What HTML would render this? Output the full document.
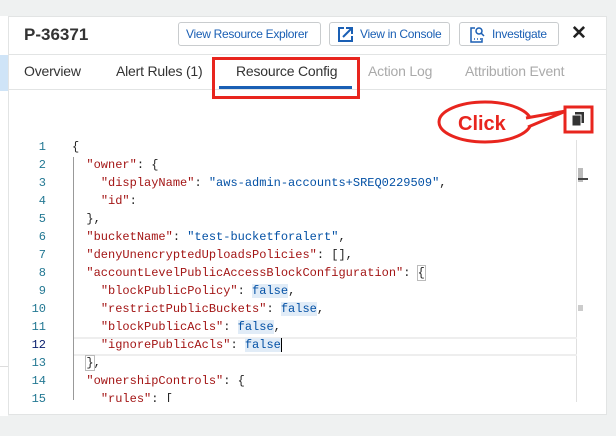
<!DOCTYPE html>
<html><head><meta charset="utf-8"><style>
*{margin:0;padding:0;box-sizing:border-box}
body{width:616px;height:436px;background:#eff1f1;position:relative;overflow:hidden;font-family:"Liberation Sans",sans-serif}
.side{position:absolute;left:0;top:16px;width:8px;height:400px;background:#fff}
.panel{position:absolute;left:8px;top:16px;width:599px;height:399px;background:#fff;border:1px solid #e2e4e4}
.abs{position:absolute}
.btn{position:absolute;top:22px;height:24px;border:1px solid #c9ccce;border-radius:3px;color:#1a5fb4;font-size:12px;letter-spacing:-0.3px;line-height:22px;padding:0 7px;background:#fff;white-space:nowrap;overflow:hidden}
.tab{position:absolute;top:63px;font-size:14px;letter-spacing:-0.2px;color:#333}
.code{position:absolute;left:0;font-family:"Liberation Mono",monospace;font-size:12px;color:#222;white-space:pre}
.ln{position:absolute;width:46px;text-align:right;font-family:"Liberation Mono",monospace;font-size:12px;color:#237893;left:0}
.ln,.code{line-height:18px}
.k{color:#a31515}.s{color:#0451a5}.b{color:#0451a5;background:#e1ecf7}
</style></head><body>
<div class="side"><div class="abs" style="left:0;top:39px;width:8px;height:36px;background:#cfe4f7"></div><div class="abs" style="left:0;top:350px;width:8px;height:1px;background:#ddd"></div></div>
<div class="panel"></div>
<div class="abs" style="left:24px;top:25px;font-size:17px;font-weight:bold;color:#333">P-36371</div>
<div class="btn" style="left:178px;width:143px">View Resource Explorer</div>
<div class="btn" style="left:329px;width:121px;padding-left:30px">View in Console</div>
<svg class="abs" style="left:337px;top:26px" width="17" height="17" viewBox="0 0 17 17" fill="none" stroke="#1a5fb4" stroke-width="2"><path d="M7 2H2v13h13v-5"/><path d="M6 11L15 2M9 2h6v6"/></svg>
<div class="btn" style="left:459px;width:100px;padding-left:32px">Investigate</div>
<svg class="abs" style="left:469px;top:26px" width="16" height="17" viewBox="0 0 16 17" fill="none" stroke="#1a5fb4" stroke-width="1.5"><path d="M6 2H2v14h11v-4"/><circle cx="10" cy="5" r="3"/><path d="M12 7l3 3"/><path d="M5 13h1M8 13h1M11 13h1"/></svg>
<div class="abs" style="left:571px;top:22px;font-size:19px;font-weight:bold;color:#222">✕</div>
<div class="abs" style="left:8px;top:54px;width:599px;height:1px;background:#e2e4e4"></div>
<div class="tab" style="left:24px">Overview</div>
<div class="tab" style="left:116px">Alert Rules (1)</div>
<div class="tab" style="left:236px">Resource Config</div>
<div class="tab" style="left:368px;color:#aaa">Action Log</div>
<div class="tab" style="left:465px;color:#aaa">Attribution Event</div>
<div class="abs" style="left:219px;top:86px;width:133px;height:3px;background:#1a5fb4"></div>
<div class="abs" style="left:8px;top:89px;width:599px;height:1px;background:#e2e4e4"></div>
<div class="abs" style="left:212px;top:57px;width:148px;height:42px;border:3px solid #e8251e"></div>
<svg class="abs" style="left:430px;top:98px" width="170" height="50"><ellipse cx="55" cy="24" rx="46" ry="20" fill="#fff" stroke="#e8251e" stroke-width="3"/><path d="M96 20L136 13L98 29" fill="#fff" stroke="#e8251e" stroke-width="3"/><rect x="135" y="9" width="27" height="25" fill="#fff" stroke="#e8251e" stroke-width="3"/><rect x="145" y="14" width="9" height="11" fill="#333"/><rect x="142" y="17" width="9" height="11" fill="#333" stroke="#fff" stroke-width="1"/></svg>
<div class="abs" style="left:458px;top:113px;font-size:20px;font-weight:bold;color:#e8251e">Click</div>
<div class="abs" style="left:576px;top:140px;width:1px;height:262px;background:#e0e0e0"></div>
<div class="abs" style="left:578px;top:168px;width:5px;height:14px;background:#bbb"></div>
<div class="abs" style="left:578px;top:178px;width:10px;height:2px;background:#444"></div>
<div class="abs" style="left:578px;top:305px;width:5px;height:6px;background:#ccc"></div>
<div class="abs" style="left:73px;top:157px;width:1px;height:243px;background:#999"></div>
<div class="abs" style="left:74px;top:337px;width:503px;height:19px;border-top:2px solid #eee;border-bottom:2px solid #eee"></div>
<div class="abs" style="left:0;top:138px;width:616px;height:264px;overflow:hidden">
<div class="ln" style="top:0">1<br>2<br>3<br>4<br>5<br>6<br>7<br>8<br>9<br>10<br>11<br><span style="color:#0b216f">12</span><br>13<br>14<br>15</div>
<div class="code" style="left:72px;top:0">{
  <span class="k">"owner"</span>: {
    <span class="k">"displayName"</span>: <span class="s">"aws-admin-accounts+SREQ0229509"</span>,
    <span class="k">"id"</span>:
  },
  <span class="k">"bucketName"</span>: <span class="s">"test-bucketforalert"</span>,
  <span class="k">"denyUnencryptedUploadsPolicies"</span>: [],
  <span class="k">"accountLevelPublicAccessBlockConfiguration"</span>: <span style="outline:1px solid #bbb">{</span>
    <span class="k">"blockPublicPolicy"</span>: <span class="b">false</span>,
    <span class="k">"restrictPublicBuckets"</span>: <span class="b">false</span>,
    <span class="k">"blockPublicAcls"</span>: <span class="b">false</span>,
    <span class="k">"ignorePublicAcls"</span>: <span class="b" style="border-right:1px solid #000">false</span>
  <span style="outline:1px solid #bbb">}</span>,
  <span class="k">"ownershipControls"</span>: {
    <span class="k">"rules"</span>: [</div>
</div>
</body></html>
